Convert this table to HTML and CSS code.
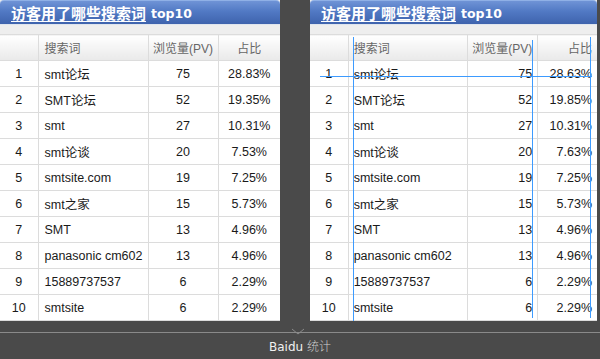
FILE: index.html
```html
<!DOCTYPE html>
<html>
<head>
<meta charset="utf-8">
<link rel="stylesheet" href="styles.css">
</head>
<body>
<div class="panels">
  <div class="panel left">
    <div class="head"><span class="title">访客用了哪些搜索词</span><span class="top">top10</span></div>
    <div class="gap"></div>
    <table class="tbl">
      <colgroup><col class="c1"><col class="c2"><col class="c3"><col class="c4"></colgroup>
      <tr class="th"><td></td><td class="kw">搜索词</td><td class="ctr">浏览量(PV)</td><td class="ctr">占比</td></tr>
      <tr><td class="ctr">1</td><td class="kw">smt论坛</td><td class="ctr">75</td><td class="ctr">28.83%</td></tr>
      <tr><td class="ctr">2</td><td class="kw">SMT论坛</td><td class="ctr">52</td><td class="ctr">19.35%</td></tr>
      <tr><td class="ctr">3</td><td class="kw">smt</td><td class="ctr">27</td><td class="ctr">10.31%</td></tr>
      <tr><td class="ctr">4</td><td class="kw">smt论谈</td><td class="ctr">20</td><td class="ctr">7.53%</td></tr>
      <tr><td class="ctr">5</td><td class="kw">smtsite.com</td><td class="ctr">19</td><td class="ctr">7.25%</td></tr>
      <tr><td class="ctr">6</td><td class="kw">smt之家</td><td class="ctr">15</td><td class="ctr">5.73%</td></tr>
      <tr><td class="ctr">7</td><td class="kw">SMT</td><td class="ctr">13</td><td class="ctr">4.96%</td></tr>
      <tr><td class="ctr">8</td><td class="kw">panasonic cm602</td><td class="ctr">13</td><td class="ctr">4.96%</td></tr>
      <tr><td class="ctr">9</td><td class="kw">15889737537</td><td class="ctr">6</td><td class="ctr">2.29%</td></tr>
      <tr><td class="ctr">10</td><td class="kw">smtsite</td><td class="ctr">6</td><td class="ctr">2.29%</td></tr>
    </table>
  </div>
  <div class="panel right">
    <div class="head"><span class="title">访客用了哪些搜索词</span><span class="top">top10</span></div>
    <div class="gap"></div>
    <table class="tbl">
      <colgroup><col class="c1"><col class="c2r"><col class="c3"><col class="c4r"></colgroup>
      <tr class="th"><td></td><td class="kw">搜索词</td><td class="rt">浏览量(PV)</td><td class="rt">占比</td></tr>
      <tr><td class="ctr">1</td><td class="kw">smt论坛</td><td class="rt">75</td><td class="rt">28.63%</td></tr>
      <tr><td class="ctr">2</td><td class="kw">SMT论坛</td><td class="rt">52</td><td class="rt">19.85%</td></tr>
      <tr><td class="ctr">3</td><td class="kw">smt</td><td class="rt">27</td><td class="rt">10.31%</td></tr>
      <tr><td class="ctr">4</td><td class="kw">smt论谈</td><td class="rt">20</td><td class="rt">7.63%</td></tr>
      <tr><td class="ctr">5</td><td class="kw">smtsite.com</td><td class="rt">19</td><td class="rt">7.25%</td></tr>
      <tr><td class="ctr">6</td><td class="kw">smt之家</td><td class="rt">15</td><td class="rt">5.73%</td></tr>
      <tr><td class="ctr">7</td><td class="kw">SMT</td><td class="rt">13</td><td class="rt">4.96%</td></tr>
      <tr><td class="ctr">8</td><td class="kw">panasonic cm602</td><td class="rt">13</td><td class="rt">4.96%</td></tr>
      <tr><td class="ctr">9</td><td class="kw">15889737537</td><td class="rt">6</td><td class="rt">2.29%</td></tr>
      <tr><td class="ctr">10</td><td class="kw">smtsite</td><td class="rt">6</td><td class="rt">2.29%</td></tr>
    </table>
    <div class="guide gv1"></div>
    <div class="guide gv2"></div>
    <div class="guide gv3"></div>
    <div class="guide gh1"></div>
  </div>
</div>
<div class="footer">
  <div class="rule">
    <svg class="notch" width="14" height="8" viewBox="0 0 14 8"><path d="M1 1 L7 6 L13 1" fill="none" stroke="#8a8a8a" stroke-width="1"/></svg>
  </div>
  <div class="brand">Baidu <span class="cn">统计</span></div>
</div>
</body>
</html>
```
FILE: styles.css
```css
html, body {
  margin: 0;
  padding: 0;
}
body {
  width: 600px;
  height: 359px;
  overflow: hidden;
  background: #4a4a4a;
  font-family: "Liberation Sans", Arial, "Noto Sans CJK SC", sans-serif;
  font-size: 12px;
  color: #1a1a1a;
}
.panels {
  display: flex;
  gap: 30px;
  height: 321px;
}
.panel {
  position: relative;
  background: #ececec;
  height: 321px;
}
.panel.left {
  width: 280px;
}
.panel.right {
  width: 287px;
}
.head {
  height: 24px;
  box-sizing: border-box;
  border-radius: 4px 4px 0 0;
  background: linear-gradient(#6f93d6 0%, #5179c4 45%, #3e63ad 100%);
  border-top: 1px solid #8fb0e6;
  display: flex;
  align-items: center;
  padding-left: 11px;
  gap: 5px;
  color: #fff;
}
.title {
  font-family: "Noto Sans CJK SC", sans-serif;
  font-weight: bold;
  font-size: 15px;
  line-height: 17px;
  text-decoration: underline;
  text-underline-offset: 2px;
}
.top {
  font-family: "DejaVu Sans", Verdana, sans-serif;
  font-weight: bold;
  font-size: 12.5px;
  margin-top: 1px;
}
.gap {
  height: 9px;
  background: #eeeeee;
  border-top: 1px solid #dfe5ee;
}
.tbl {
  border-collapse: collapse;
  width: 100%;
  background: #fff;
  table-layout: fixed;
  font-size: 12.5px;
}
.tbl td {
  height: 25px;
  border: 1px solid #dcdcdc;
  padding: 0;
  white-space: nowrap;
  overflow: hidden;
}
.tbl tr td:first-child {
  border-left: none;
}
.tbl tr td:last-child {
  border-right: none;
}
.c1 { width: 38px; }
.c2 { width: 110px; }
.c3 { width: 70px; }
.c4 { width: 62px; }
.c2r { width: 119px; }
.c4r { width: 59px; }
.th td {
  background: linear-gradient(#ffffff, #e9e9e9);
  color: #666;
  font-size: 12px;
}
.ctr { text-align: center; }
.rt { text-align: right; padding-right: 5px !important; }
.kw { padding-left: 6px !important; }
.right .kw { padding-left: 5px !important; }
.guide {
  position: absolute;
  background: #3d9bff;
}
.gv1 { left: 43px; top: 37px; width: 1px; height: 284px; }
.gv2 { left: 222px; top: 40px; width: 1px; height: 278px; }
.gv3 { left: 280px; top: 37px; width: 1px; height: 281px; }
.gh1 { left: 10px; top: 76px; width: 272px; height: 1px; }
.footer {
  height: 38px;
  padding-top: 11px;
  box-sizing: border-box;
}
.rule {
  position: relative;
  height: 1px;
  background: #8a8a8a;
}
.notch {
  position: absolute;
  left: 291px;
  top: -4px;
}
.brand {
  text-align: center;
  color: #f0f0f0;
  font-family: "DejaVu Sans", "Noto Sans CJK SC", sans-serif;
  font-size: 12px;
  margin-top: 4px;
}
.brand .cn {
  color: #cfcfcf;
  font-weight: 300;
}
```
